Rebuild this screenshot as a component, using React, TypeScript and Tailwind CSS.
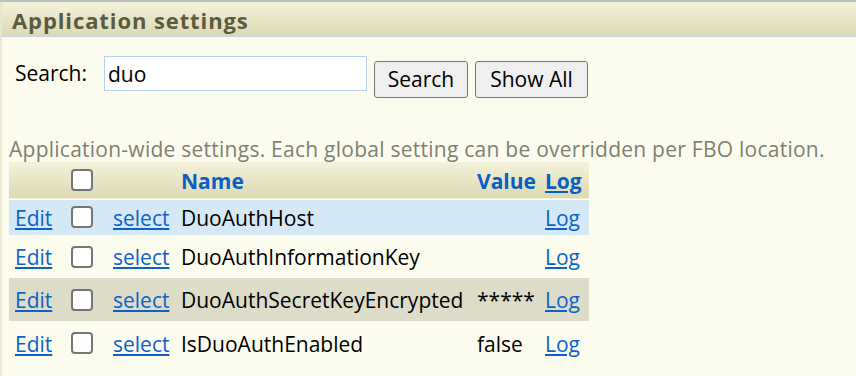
const rows = [
	{ name: 'DuoAuthHost', value: '', bg: 'bg-[#d4e8f6]', h: 'h-[36px]' },
	{ name: 'DuoAuthInformationKey', value: '', bg: '', h: 'h-[43px]' },
	{ name: 'DuoAuthSecretKeyEncrypted', value: '*****', bg: 'bg-[#dcdcc8]', h: 'h-[43px]' },
	{ name: 'IsDuoAuthEnabled', value: 'false', bg: '', h: 'h-[44px]' },
];

const Box = () => (
	<span className="block w-[22px] h-[22px] rounded-[4px] border-2 border-[#767676] bg-white" />
);

const App = () => {
	return (
		<div
			className="w-[856px] h-[376px] overflow-hidden bg-[#fcfcee] border-t-2 border-[#b8c0c0] text-[21px] text-black"
			style={{ fontFamily: '"Open Sans", "Noto Sans", sans-serif' }}
		>
			<div className="h-[35px] flex items-center pl-[10px] pt-[3px] bg-gradient-to-b from-[#f4f2da] to-[#dcd9b4] border-b border-[#c9d4dc] border-l-2 border-l-[#e8e6cc]">
				<span className="font-bold text-[#5b5b42] text-[22px] tracking-[0.9px]">Application settings</span>
			</div>

			<div className="border-l-2 border-[#ecead2] h-full">
				<div className="flex items-start pt-[19px] pl-[13px]">
					<span className="w-[89px] leading-[35px]">Search:</span>
					<input
						defaultValue="duo"
						className="w-[263px] h-[35px] px-[3px] bg-white border border-[#b8d0f4] outline-none"
					/>
					<button className="ml-[7px] mt-[5px] w-[94px] h-[37px] bg-[#efefef] border border-[#767676] rounded-[3px]">
						Search
					</button>
					<button className="ml-[7px] mt-[5px] w-[113px] h-[37px] bg-[#efefef] border border-[#767676] rounded-[3px]">
						Show All
					</button>
				</div>

				<p className="mt-[38px] pl-[7px] text-[#7f7f72] leading-[26px] tracking-[0.25px]">
					Application-wide settings. Each global setting can be overridden per FBO location.
				</p>

				<table className="ml-[7px] w-[580px] table-fixed border-collapse">
					<colgroup>
						<col className="w-[62px]" />
						<col className="w-[42px]" />
						<col className="w-[68px]" />
						<col className="w-[296px]" />
						<col className="w-[68px]" />
						<col className="w-[44px]" />
					</colgroup>
					<thead>
						<tr className="bg-gradient-to-b from-[#f4f2da] to-[#dcd9b4] border-b border-white">
							<th className="h-[37px]" />
							<th className="align-middle">
								<Box />
							</th>
							<th />
							<th className="text-left font-bold text-[#0a5fc4] pt-[2px]">Name</th>
							<th className="text-left font-bold text-[#0a5fc4] whitespace-nowrap pt-[2px]">Value</th>
							<th className="text-left font-bold pt-[2px]">
								<a className="text-[#0a5fc4] underline">Log</a>
							</th>
						</tr>
					</thead>
					<tbody>
						{rows.map((r) => (
							<tr key={r.name} className={r.bg}>
								<td className={`${r.h} pl-[6px] pt-[3px]`}>
									<a className="text-[#0b63c9] underline">Edit</a>
								</td>
								<td className="align-middle">
									<Box />
								</td>
								<td className="pt-[3px]">
									<a className="text-[#0b63c9] underline">select</a>
								</td>
								<td className="whitespace-nowrap pt-[3px]">{r.name}</td>
								<td className="whitespace-nowrap pt-[3px]">{r.value}</td>
								<td className="pt-[3px]">
									<a className="text-[#0b63c9] underline">Log</a>
								</td>
							</tr>
						))}
					</tbody>
				</table>
			</div>
		</div>
	);
};

export default App;
